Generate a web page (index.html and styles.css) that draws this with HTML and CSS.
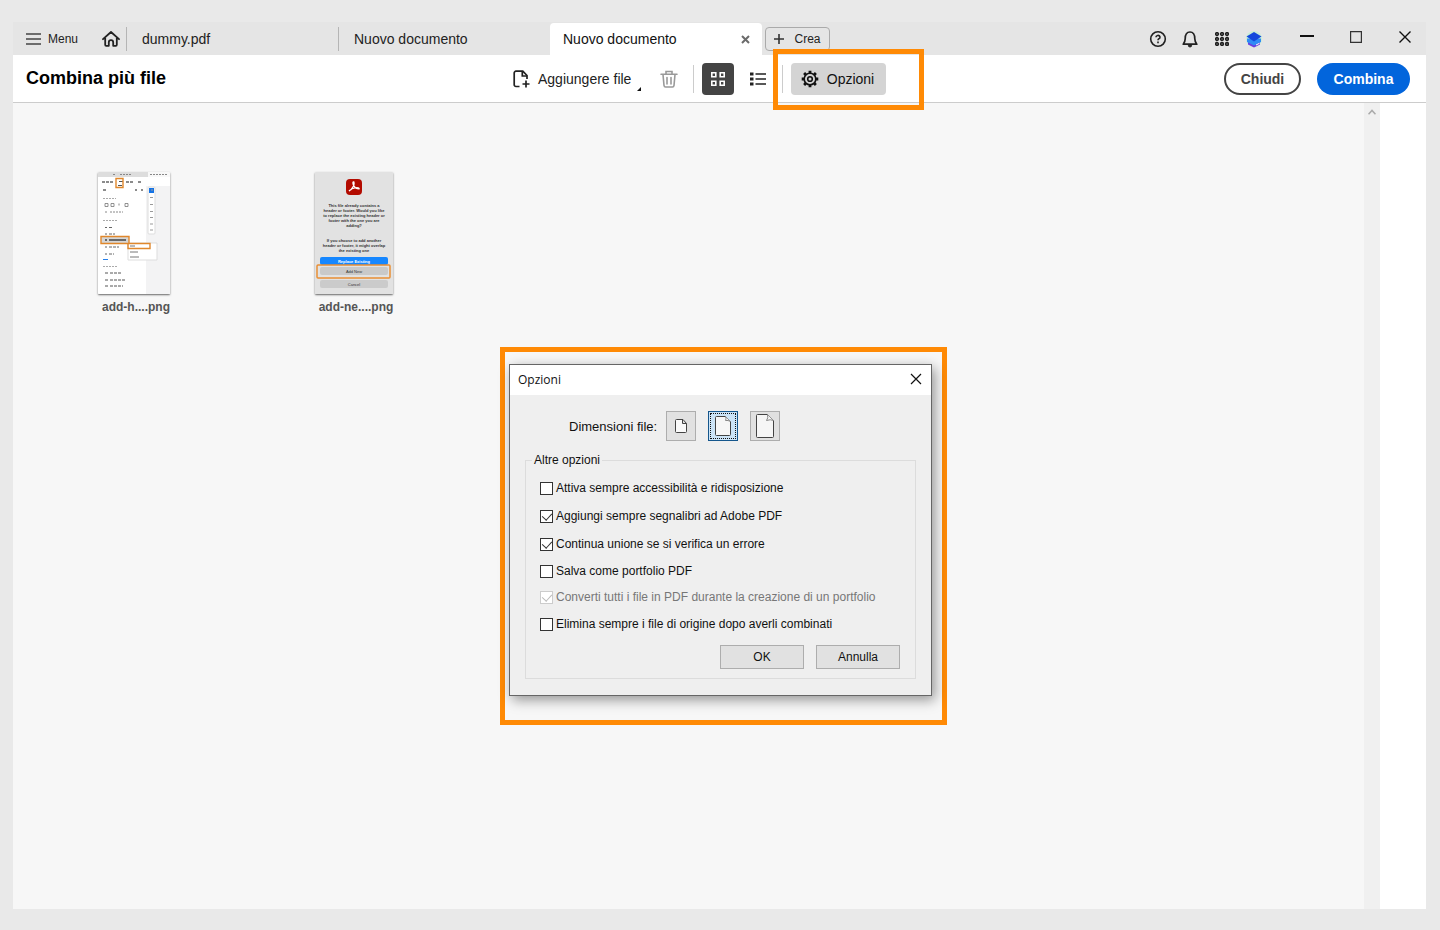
FILE: index.html
```html
<!DOCTYPE html>
<html lang="it">
<head>
<meta charset="UTF-8">
<title>Combina più file</title>
<link rel="stylesheet" href="styles.css">
</head>
<body>
<div class="window">
	<header class="titlebar">
		<div class="start">
			<button type="button" class="menu">
				<svg width="15" height="12" viewBox="0 0 15 12" stroke="#444" stroke-width="1.7"><path d="M0 1h15M0 6h15M0 11h15"/></svg>
				Menu
			</button>
			<button type="button" class="home" aria-label="Home">
				<svg width="18" height="16" viewBox="0 0 18 16" fill="none" stroke="#222" stroke-width="1.8" stroke-linejoin="round" stroke-linecap="round"><path d="M1 8.200 9 1l8 7.200M3.200 7v6.800q0 1 1 1h2.600v-3.400a2.200 2.200 0 0 1 4.400 0v3.400h2.600q1 0 1-1V7"/></svg>
			</button>
		</div>
		<nav class="tabs">
			<a href="#" class="tab">dummy.pdf</a>
			<a href="#" class="tab">Nuovo documento</a>
			<div class="tab active">
				<a href="#">Nuovo documento</a>
				<button type="button" aria-label="Chiudi scheda">
					<svg width="9" height="9" viewBox="0 0 9 9" stroke="#6b6b6b" stroke-width="2"><path d="M1 1l7 7M8 1l-7 7"/></svg>
				</button>
			</div>
		</nav>
		<button type="button" class="create">
			<svg width="10" height="10" viewBox="0 0 10 10" stroke="#333" stroke-width="1.6"><path d="M5 0v10M0 5h10"/></svg>
			Crea
		</button>
		<div class="tools">
			<button type="button" aria-label="Guida">
				<svg width="18" height="18" viewBox="0 0 18 18" fill="none" stroke="#222" stroke-width="1.6"><circle cx="9" cy="9" r="7.300"/><path d="M7 7.300a2 1.800 0 1 1 2.900 1.500Q9 9.300 9 10.300"/><path d="M9 11.600v1.700"/></svg>
			</button>
			<button type="button" aria-label="Notifiche">
				<svg width="18" height="18" viewBox="0 0 18 18" fill="none" stroke="#222" stroke-width="1.700" stroke-linejoin="round"><path d="M2.200 14.200h13.600c-1.500-1.800-2-3-2-5.400C13.800 4.500 12 2 9 2S4.200 4.500 4.200 8.800c0 2.400-.5 3.600-2 5.400z"/><path d="M7.300 15.300a1.700 1.700 0 0 0 3.400 0z" fill="#222" stroke-width="1"/></svg>
			</button>
			<button type="button" aria-label="App">
				<svg width="14" height="14" viewBox="0 0 14 14" fill="#666" stroke="#1f1f1f" stroke-width="1.300"><circle cx="2" cy="2" r="1.500"/><circle cx="7" cy="2" r="1.500"/><circle cx="12" cy="2" r="1.500"/><circle cx="2" cy="7" r="1.500"/><circle cx="7" cy="7" r="1.500"/><circle cx="12" cy="7" r="1.500"/><circle cx="2" cy="12" r="1.500"/><circle cx="7" cy="12" r="1.500"/><circle cx="12" cy="12" r="1.500"/></svg>
			</button>
			<button type="button" aria-label="Profilo">
				<svg width="18" height="18" viewBox="0 0 18 18"><circle cx="9" cy="9" r="8" fill="#c9eed6"/><path d="M3 10.500 9 8l6 2.500v4L9 17.500l-6-3z" fill="#6a3ee0"/><path d="M2 8.500h14v3.500L9 15.500 2 12z" fill="#2f8bf5"/><path d="M1.500 6.500 9 2l7.500 4.500L9 11.500z" fill="#1348dc"/><path d="M11 15l3.500-1.700" stroke="#fff"/></svg>
			</button>
		</div>
		<div class="controls">
			<button type="button" aria-label="Riduci a icona">
				<svg width="14" height="12" viewBox="0 0 14 12" stroke="#111" stroke-width="2"><path d="M0 5h14"/></svg>
			</button>
			<button type="button" aria-label="Ingrandisci">
				<svg width="12" height="12" viewBox="0 0 12 12" fill="none" stroke="#333" stroke-width="1.200"><path d="M.6.6h10.800v10.800H.6z"/></svg>
			</button>
			<button type="button" aria-label="Chiudi finestra">
				<svg width="12" height="12" viewBox="0 0 12 12" stroke="#111" stroke-width="1.400"><path d="M.5.5l11 11M11.500.5l-11 11"/></svg>
			</button>
		</div>
	</header>

	<div class="toolbar">
		<h1>Combina più file</h1>
		<div class="actions">
			<button type="button" class="add">
				<svg width="17" height="18" viewBox="0 0 17 18" fill="none" stroke="#222" stroke-width="1.700"><path d="M6.500 16.500H3A1.800 1.800 0 0 1 1.200 14.700V3A1.800 1.800 0 0 1 3 1.200h6.800L14 5.500V9"/><path d="M9.300 1.500V6H14" /><path d="M13 10.500v7M9.500 14h7"/></svg>
				Aggiungere file
				<span class="more"></span>
			</button>
			<button type="button" class="icon" aria-label="Elimina" disabled>
				<svg width="18" height="18" viewBox="0 0 18 18" fill="none" stroke="#999" stroke-width="1.600" stroke-linecap="round"><path d="M1 4.200h16M6 4V1.500h6V4M3 4.500l1 11q.2 1.500 1.500 1.500h7q1.300 0 1.500-1.500l1-11M7 7.500v6.500M11 7.500v6.500"/></svg>
			</button>
			<span class="divider"></span>
			<button type="button" class="icon selected" aria-label="Miniature" aria-pressed="true">
				<svg width="16" height="16" viewBox="0 0 16 16" fill="none" stroke="#fff" stroke-width="1.600"><path d="M1.800 1.800h4v4h-4zM10.200 1.800h4v4h-4zM1.800 10.200h4v4h-4zM10.200 10.200h4v4h-4z"/></svg>
			</button>
			<button type="button" class="icon" aria-label="Elenco" aria-pressed="false">
				<svg width="16" height="14" viewBox="0 0 16 14" stroke="#222"><path d="M0 2h3.500M0 7h3.500M0 12h3.500" stroke-width="3.200"/><path d="M5.500 2H16M5.500 7H16M5.500 12H16" stroke-width="1.600"/></svg>
			</button>
			<span class="divider"></span>
			<div class="options">
				<button type="button">
					<svg width="18" height="18" viewBox="0 0 18 18" fill="none" stroke="#111"><circle cx="9" cy="9" r="5.800" stroke-width="1.600"/><circle cx="9" cy="9" r="2.300" stroke-width="1.600"/><path d="M9 .7v2.300M9 15v2.300M.7 9H3M15 9h2.300M3.100 3.100l1.700 1.700M13.200 13.200l1.700 1.700M3.100 14.900l1.700-1.700M13.200 4.800l1.700-1.700" stroke-width="2.800"/></svg>
					Opzioni
				</button>
			</div>
		</div>
		<div class="finish">
			<button type="button" class="close">Chiudi</button>
			<button type="button" class="combine">Combina</button>
		</div>
	</div>

	<main class="workspace">
		<div class="files">
			<figure>
				<svg class="thumb" width="72" height="122" viewBox="0 0 72 122">
					<rect width="72" height="122" fill="#fff"/>
					<path d="M0 0h72v5H0z" fill="#ddd"/>
					<path d="M48 14h24v108H48z" fill="#f3f3f4"/>
					<path d="M50 0h22v5H50z" fill="#f8f8f8"/>
					<path d="M15 2.500h3M22 2.500h12M52 2.500h18" stroke="#888" stroke-dasharray="2 1"/>
					<path d="M4 10h12M28 10h8M40 10h4M5 18h4M37 18h2M43 18h2" stroke="#666" stroke-width="1.500" stroke-dasharray="3 1"/>
					<path d="M21 9.500h4M20 13.500h4" stroke="#555"/>
					<path d="M5 26.500h13M5 48.500h15M5 94.500h15" stroke="#aaa" stroke-dasharray="2 1"/>
					<path d="M7 31.500h3v3H7zM13 31.500h3v3h-3zM27 31.500h3v3h-3z" fill="none" stroke="#777" stroke-width=".8"/>
					<path d="M21 31.500v3M7 40h3M12 40h13" stroke="#888" stroke-dasharray="2 1"/>
					<path d="M7 55.500h2M11 55.500h4M7 62h2M11 62h6M7 75h2M11 75h10M7 82h2M11 82h5" stroke="#666" stroke-dasharray="3 1"/>
					<path d="M5 87.500h5" stroke="#2680eb"/>
					<path d="M7 101h3M12 101h12M7 108h3M12 108h15M7 114h3M12 114h13" stroke="#555" stroke-dasharray="3 1"/>
					<path d="M3 64h28v8H3z" fill="#d6d6d6"/>
					<path d="M7 68h2M11 68h17" stroke="#444" stroke-width="1.500"/>
					<rect x="50" y="15" width="7" height="47" rx="1" fill="#fff" stroke="#ddd"/>
					<path d="M51 16h5v5h-5z" fill="#1473e6"/>
					<path d="M53 18h2M52 25.500h3M52 32.500h3M52 39.500h3M52 45.500h3M52 52h3M52 58h3" stroke="#999"/>
					<path d="M30 71h29v17H30z" fill="#fff" stroke="#ddd"/>
					<path d="M32 74h5M32 80h8M32 85h9" stroke="#777"/>
					<path d="M18 6.500h7v9h-7zM3 64.500h28v7H3zM30 71.500h22v5H30z" fill="none" stroke="#e0872b" stroke-width="1.400"/>
				</svg>
				<figcaption>add-h....png</figcaption>
			</figure>
			<figure>
				<svg class="thumb" width="78" height="122" viewBox="0 0 78 122">
					<rect width="78" height="122" fill="#e2e2e2"/>
					<rect x="31" y="7" width="16" height="16" rx="4" fill="#b30b00"/>
					<path d="M34 19c3-1 6-7 5-9-1-1-2 1 0 4 1 2 3 3 5 3 1-1-2-2-4-1-2 0-4 1-6 3z" fill="none" stroke="#fff" stroke-width="1.200"/>
					<g class="bold">
						<text x="39" y="35">This file already contains a</text>
						<text x="39" y="40">header or footer. Would you like</text>
						<text x="39" y="45">to replace the existing header or</text>
						<text x="39" y="50">footer with the one you are</text>
						<text x="39" y="55">adding?</text>
						<text x="39" y="70">If you choose to add another</text>
						<text x="39" y="75">header or footer, it might overlap</text>
						<text x="39" y="80">the existing one</text>
					</g>
					<rect x="5" y="85" width="68" height="8" rx="2" fill="#1687ff"/>
					<rect x="5" y="95" width="68" height="8" rx="2" fill="#c9c9c9"/>
					<rect x="5" y="108" width="68" height="8" rx="2" fill="#cbcbcb"/>
					<rect x="2" y="93" width="73" height="13" rx="1" fill="none" stroke="#e98f35" stroke-width="1.500"/>
					<text x="39" y="91" class="light">Replace Existing</text>
					<text x="39" y="101">Add New</text>
					<text x="39" y="114">Cancel</text>
				</svg>
				<figcaption>add-ne....png</figcaption>
			</figure>
		</div>
		<div class="scrollbar">
			<svg width="8" height="6" viewBox="0 0 8 6" fill="none" stroke="#aaa" stroke-width="1.600"><path d="M.5 5.300 4 1.500l3.500 3.800"/></svg>
		</div>

		<div class="overlay">
			<div class="callout">
				<form class="dialog" role="dialog" aria-labelledby="dialogTitle">
					<div class="dialog-title">
						<h2 id="dialogTitle">Opzioni</h2>
						<button type="button" aria-label="Chiudi">
							<svg width="12" height="12" viewBox="0 0 12 12" stroke="#111" stroke-width="1.200"><path d="M1 1l10 10M11 1 1 11"/></svg>
						</button>
					</div>
					<div class="sizes">
						<span>Dimensioni file:</span>
						<button type="button" aria-label="Piccole">
							<svg width="12" height="14" viewBox="0 0 12 14" fill="#fafafa" stroke="#444"><path d="M.5 1.500q0-1 1-1H8l3.500 4v8q0 1-1 1h-9q-1 0-1-1zM7.500.5v4h4"/></svg>
						</button>
						<button type="button" class="chosen" aria-label="Predefinite">
							<svg width="16" height="20" viewBox="0 0 16 20" fill="#f6f6f6" stroke="#444"><path d="M.5 1.500q0-1 1-1h9l5 5v13q0 1-1 1h-13q-1 0-1-1z"/><path d="M10.500.5q1 2.500 0 4 2.500-.5 5 1" stroke="#888"/></svg>
						</button>
						<button type="button" aria-label="Grandi">
							<svg width="18" height="24" viewBox="0 0 18 24" fill="#f6f6f6" stroke="#444"><path d="M.5 1.500q0-1 1-1h10l6 6v16q0 1-1 1h-15q-1 0-1-1z"/><path d="M11.500.5q1 3.500-1 6 4-1.500 7 0" stroke="#888"/></svg>
						</button>
					</div>
					<fieldset>
						<legend>Altre opzioni</legend>
						<div class="row">
							<input type="checkbox" id="accessible">
							<label for="accessible">Attiva sempre accessibilità e ridisposizione</label>
						</div>
						<div class="row">
							<input type="checkbox" id="bookmarks" checked>
							<label for="bookmarks">Aggiungi sempre segnalibri ad Adobe PDF</label>
						</div>
						<div class="row">
							<input type="checkbox" id="errors" checked>
							<label for="errors">Continua unione se si verifica un errore</label>
						</div>
						<div class="row tight">
							<input type="checkbox" id="portfolio">
							<label for="portfolio">Salva come portfolio PDF</label>
						</div>
						<div class="row tight">
							<input type="checkbox" id="convert" checked disabled>
							<label for="convert">Converti tutti i file in PDF durante la creazione di un portfolio</label>
						</div>
						<div class="row">
							<input type="checkbox" id="remove">
							<label for="remove">Elimina sempre i file di origine dopo averli combinati</label>
						</div>
						<div class="buttons">
							<button type="button">OK</button>
							<button type="button">Annulla</button>
						</div>
					</fieldset>
				</form>
			</div>
		</div>
	</main>
</div>
</body>
</html>
```
FILE: styles.css
```css
*{
	box-sizing:border-box;
}
body{
	margin:0;
	min-height:100vh;
	display:flex;
	background-color:#e9e9e9;
	font-family:"Liberation Sans", Arial, sans-serif;
	font-size:14px;
	color:#222;
}
button{
	display:flex;
	align-items:center;
	justify-content:center;
	padding:0;
	border:0;
	background:none;
	font:inherit;
	color:inherit;
}
a{
	color:inherit;
	text-decoration:none;
}
svg{
	flex:none;
}
.window{
	flex:1;
	display:flex;
	flex-direction:column;
	margin:22px 14px 21px 13px;
}

/* title bar */
.titlebar{
	display:flex;
	align-items:center;
	height:33px;
	background-color:#e5e5e5;
}
.start{
	display:flex;
	align-items:center;
	width:113px;
	padding-left:13px;
}
.menu{
	gap:7px;
	font-size:12px;
}
.home{
	margin-left:24px;
}
.tabs{
	display:flex;
	align-items:center;
	height:100%;
}
.tab{
	width:212px;
	padding-left:15px;
	border-left:1px solid #b5b5b5;
	line-height:24px;
}
.tab.active{
	display:flex;
	align-items:center;
	justify-content:space-between;
	align-self:flex-end;
	height:32px;
	padding:0 12px 0 13px;
	border-left:0;
	border-radius:4px 4px 0 0;
	background-color:#fff;
	color:#111;
}
.create{
	gap:10px;
	width:65px;
	height:24px;
	margin-left:3px;
	border:1px solid #aaa;
	border-radius:4px;
	font-size:12px;
}
.tools{
	display:flex;
	margin-left:auto;
	margin-right:16px;
}
.tools button{
	width:32px;
	height:32px;
}
.controls{
	display:flex;
	gap:7px;
}
.controls button{
	width:42px;
	height:30px;
	padding-bottom:3px;
}

/* toolbar */
.toolbar{
	display:grid;
	grid-template-columns:1fr auto 1fr;
	align-items:center;
	height:48px;
	padding:0 16px 0 13px;
	border-bottom:1px solid #ccc;
	background-color:#fff;
}
h1{
	margin:0;
	font-size:18px;
	color:#000;
}
.actions{
	display:flex;
	align-items:center;
	gap:8px;
	padding-right:37px;
}
.add{
	position:relative;
	justify-content:flex-start;
	gap:8px;
	width:132px;
	height:32px;
}
.more{
	position:absolute;
	right:4px;
	bottom:4px;
	border-left:4px solid transparent;
	border-bottom:4px solid #111;
}
.icon{
	width:32px;
	height:32px;
	border-radius:4px;
}
.icon.selected{
	background-color:#444;
}
.divider{
	width:1px;
	height:28px;
	background-color:#ccc;
}
.options{
	position:relative;
	z-index:1;
}
.options button{
	gap:8px;
	width:95px;
	height:32px;
	padding-right:2px;
	border-radius:4px;
	background-color:#d4d4d4;
	color:#111;
}
.options::after{
	content:"";
	position:absolute;
	top:-14px;
	right:-38px;
	bottom:-15px;
	left:-18px;
	border:5px solid #ff8a05;
	pointer-events:none;
}
.finish{
	display:flex;
	justify-content:flex-end;
	gap:16px;
}
.finish button{
	height:32px;
	border-radius:16px;
	font-weight:bold;
}
.close{
	width:77px;
	border:2px solid #444;
	color:#444;
}
.combine{
	width:93px;
	background-color:#0265dc;
	color:#fff;
}

/* files */
.workspace{
	position:relative;
	flex:1;
	display:flex;
	padding-right:46px;
	background-color:#fff;
}
.files{
	flex:1;
	display:grid;
	grid-template-columns:repeat(auto-fill, 220px);
	align-content:start;
	padding:69px 0 0 11px;
	background-color:#f7f7f7;
}
figure{
	display:flex;
	flex-direction:column;
	align-items:center;
	gap:5px;
	margin:0;
}
.thumb{
	border-radius:1px;
	box-shadow:0 1px 2px 0 #666;
	font-size:4px;
	text-anchor:middle;
	fill:#333;
}
.thumb .bold{
	font-weight:bold;
}
.thumb .light{
	font-weight:bold;
	fill:#fff;
}
figcaption{
	padding-left:4px;
	font-size:12px;
	line-height:16px;
	font-weight:bold;
	color:#555;
}
.scrollbar{
	width:16px;
	padding-top:6px;
	background-color:#f0f0f0;
}
.scrollbar svg{
	display:block;
	margin:0 auto;
}

/* options dialog */
.overlay{
	position:absolute;
	inset:0;
	display:flex;
	align-items:flex-start;
	justify-content:center;
	padding:244px 0 0 8px;
}
.callout{
	padding:12px 10px 24px 4px;
	border:5px solid #ff8a05;
}
.dialog{
	width:423px;
	padding-bottom:16px;
	border:1px solid #666;
	background-color:#efefef;
	box-shadow:3px 4px 12px rgba(0,0,0,0.4);
	font-size:12px;
	color:#111;
}
.dialog-title{
	display:flex;
	align-items:center;
	justify-content:space-between;
	height:30px;
	padding:0 9px 2px 8px;
	background-color:#fff;
}
.dialog-title h2{
	margin:0;
	font-family:"Open Sans", sans-serif;
	font-size:12px;
	font-weight:normal;
}
.sizes{
	display:flex;
	align-items:center;
	padding:16px 0 0 59px;
}
.sizes span{
	margin-right:9px;
	font-size:13px;
}
.sizes button{
	width:30px;
	height:30px;
	margin-right:12px;
	border:1px solid #adadad;
	background-color:#e1e1e1;
}
.sizes .chosen{
	border-color:#15568c;
	background-color:#cce4f7;
	outline:1px dotted #111;
	outline-offset:-3px;
}
fieldset{
	margin:11px 15px 0;
	padding:6px 15px 9px 14px;
	border:1px solid #dcdcdc;
}
legend{
	margin-left:-8px;
	padding:0 2px;
	line-height:16px;
}
.row{
	display:flex;
	align-items:center;
	gap:3px;
	height:28px;
	white-space:nowrap;
}
.row.tight{
	height:26px;
}
input[type="checkbox"]{
	appearance:none;
	flex:none;
	display:flex;
	justify-content:center;
	width:13px;
	height:13px;
	margin:0;
	border:1px solid #333;
	background-color:#fff;
}
input[type="checkbox"]:checked::after{
	content:"";
	width:5px;
	height:8px;
	border:solid #333;
	border-width:0 1px 1px 0;
	transform:rotate(42deg);
}
input[type="checkbox"]:disabled{
	border-color:#ccc;
}
input[type="checkbox"]:disabled::after{
	border-color:#bbb;
}
input:disabled + label{
	color:#777;
}
.buttons{
	display:flex;
	justify-content:flex-end;
	gap:12px;
	margin-top:7px;
}
.buttons button{
	width:84px;
	height:24px;
	border:1px solid #adadad;
	background-color:#e1e1e1;
}
```
